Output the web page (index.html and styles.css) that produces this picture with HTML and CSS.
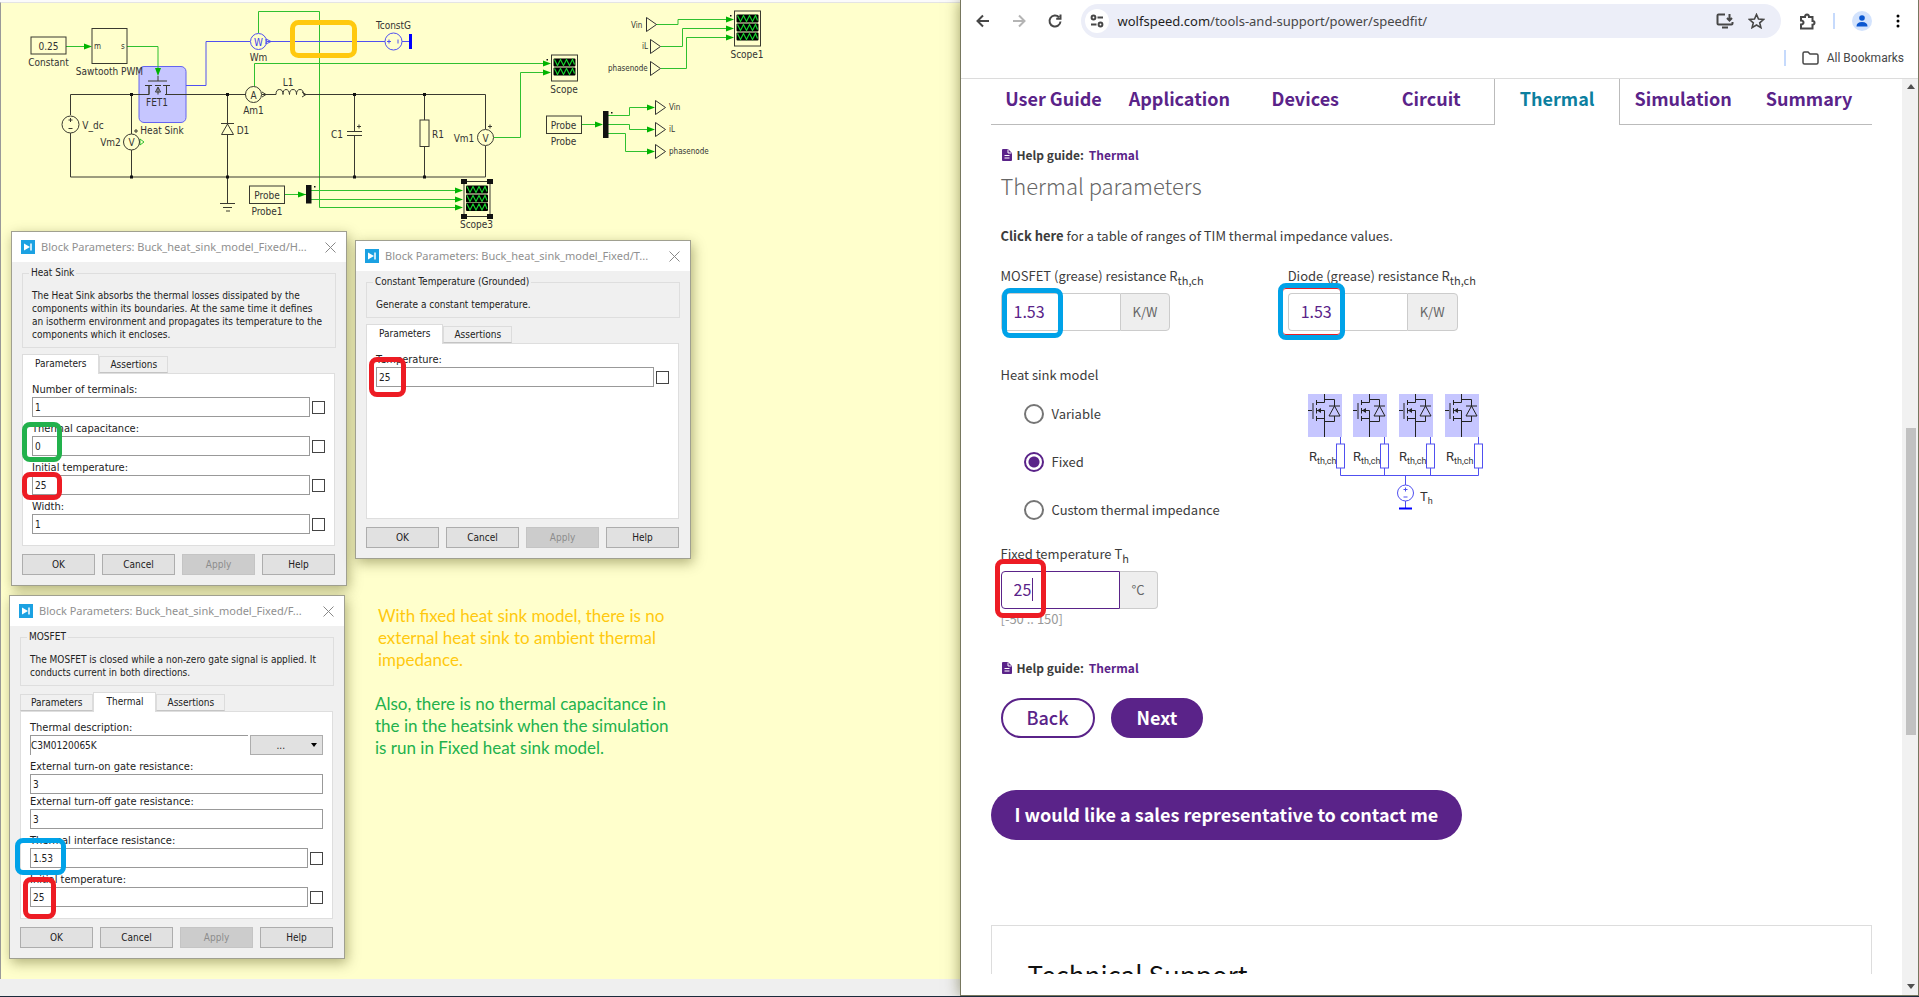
FILE: index.html
```html
<!DOCTYPE html>
<html lang="en">
<head>
<meta charset="utf-8">
<title>SpeedFit thermal parameters</title>
<link rel="stylesheet" href="styles.css">
</head>
<body>
<div class="desktop">
  <main class="editor">
    <div class="canvas">
      <svg class="schematic" width="760" height="232" viewBox="0 0 760 232" role="img" aria-label="Buck converter schematic">
        <defs>
          <g id="wave"><rect width="22" height="8" rx="1" fill="#000"/><path d="M1 1l3 6 3-6 3 6 3-6 3 6 3-6 2 5" fill="none" stroke="#16d02c" stroke-width="1.2"/></g>
          <path id="arrow" d="M-8-3L0 0-8 3z" fill="#00b400"/>
          <path id="port" d="M0-7L10 0 0 7z" fill="none" stroke="#333" stroke-width="1"/>
        </defs>
        <rect x="139" y="66.500" width="47" height="56" rx="5" fill="#c6c6ff" stroke="#6464f0"/>
        <g class="wire-green">
          <path d="M66 46.500H90M127 46.500H158V72M258.500 33V11.500H319.500V207.500H462M254.500 86V63.500H549M494 137.500H520.500V72.500H549M284 194.500H306M311 190.500H462M311 199.500H462"/>
          <path d="M656 24.500H678V19.500H731M661 46.500H682.500V28.500H731M661 68.500H686.500V37.500H731M582 124.500H602M608 115.500H629.500V107.500H654M608 124.500H629.500V129.500H654M608 133.500H625.500V151.500H654"/>
          <path d="M140 139l4 3-4 3z"/>
        </g>
        <use href="#arrow" x="92" y="46.500"/><path d="M155 68h6l-3 8z" fill="#00b400"/>
        <use href="#arrow" x="306" y="194.500"/><use href="#arrow" x="463" y="190.500"/><use href="#arrow" x="463" y="199.500"/><use href="#arrow" x="463" y="207.500"/>
        <use href="#arrow" x="551" y="63.500"/><use href="#arrow" x="551" y="72.500"/>
        <use href="#arrow" x="734" y="19.500"/><use href="#arrow" x="734" y="28.500"/><use href="#arrow" x="734" y="37.500"/>
        <use href="#arrow" x="603" y="124.500"/><use href="#arrow" x="655" y="107.500"/><use href="#arrow" x="655" y="129.500"/><use href="#arrow" x="655" y="151.500"/>
        <g class="wire-blue">
          <path d="M186 85.500H206V41.500H250M267 41.500H385M402 41.500H410"/>
          <circle cx="258.500" cy="41.500" r="8"/><circle cx="393.500" cy="41.500" r="8.500"/>
          <path d="M387 41.500h4M389 39.500v4M398 39.500v4M266 39l5 2.500-5 2.500z"/>
          <path d="M410.500 34v15" stroke="#0000ff" stroke-width="3"/>
        </g>
        <g class="wire-black">
          <rect x="31" y="37" width="35" height="17"/><rect x="92" y="28.500" width="35" height="35"/>
          <path d="M70.500 115V94.500H149V86M165 94.500H246M262 94.500H276M304 94.500H485.500V129M485.500 146V177H70.500V133M131.500 94.500V134M131.500 150V177M227.500 94.500V177"/>
          <circle cx="70.500" cy="124.500" r="8.500"/><path d="M68.500 120h4M70.500 118v4M68.500 128.500h4"/>
          <circle cx="131.500" cy="142" r="8"/><circle cx="253.500" cy="94.500" r="8"/><circle cx="485.500" cy="137.500" r="8"/>
          <path d="M134 131h4M136 129v4M357 126.500h4M359 124.500v4M488 126.500h4M490 124.500v4M262 92l4 2.500-4 2.500M302 92l4 2.500-4 2.500"/>
          <path d="M276 94.500q0-5 3.500-5t3.500 5q0-5 3-5t3.500 5q0-5 3.500-5t3.500 5q0-5 3.500-5t3.500 5"/>
          <path d="M148 81h19M158 76v5M145 85.500h7M155 85.500h6M163 85.500h7M149 86v8.500M158 94.500V88M166.500 86v8.500h9M155.500 92l2.500-5 2.500 5z"/>
          <path d="M221 123.500h13M227.500 124l-6 10.500h12z" fill="#ffffcc"/>
          <path d="M354.500 94.500V131.500M347 131.500h15M347 135.500h15M354.500 135.500V177M424.500 94.500V120M424.500 146.500V177"/>
          <rect x="420" y="120" width="9" height="26.500"/>
          <path d="M227.500 177V203.500M220 203.500h15M223 207.500h9M226 211h4"/>
          <rect x="249.500" y="186" width="35" height="17.500"/><rect x="546.500" y="116" width="35" height="17.500"/>
          <rect x="464" y="181.500" width="26" height="35"/><rect x="551.500" y="55" width="26" height="26"/><rect x="734.500" y="11" width="26" height="35"/>
        </g>
        <g fill="#111">
          <rect x="130" y="93" width="3" height="3"/><rect x="226" y="93" width="3" height="3"/><rect x="353" y="93" width="3" height="3"/><rect x="423" y="93" width="3" height="3"/>
          <rect x="130" y="175.500" width="3" height="3"/><rect x="226" y="175.500" width="3" height="3"/><rect x="353" y="175.500" width="3" height="3"/><rect x="423" y="175.500" width="3" height="3"/>
          <rect x="306" y="185" width="5.500" height="18.500"/><rect x="603" y="111" width="5.500" height="27"/>
          <rect x="461" y="179" width="6" height="5"/><rect x="487" y="179" width="6" height="5"/><rect x="461" y="214" width="6" height="5"/><rect x="487" y="214" width="6" height="5"/>
          <rect x="314" y="186" width="1.500" height="1.500"/><rect x="546.500" y="59" width="1.500" height="1.500"/><rect x="730" y="15" width="1.500" height="1.500"/><rect x="611" y="112" width="1.500" height="1.500"/>
        </g>
        <use href="#wave" x="466" y="185.500"/><use href="#wave" x="466" y="194.500"/><use href="#wave" x="466" y="203"/>
        <use href="#wave" x="553.500" y="58.500"/><use href="#wave" x="553.500" y="67.500"/>
        <use href="#wave" x="736.500" y="14.500"/><use href="#wave" x="736.500" y="23.500"/><use href="#wave" x="736.500" y="32.500"/>
        <use href="#port" x="646.500" y="24.500"/><use href="#port" x="650.500" y="46.500"/><use href="#port" x="650.500" y="68.500"/>
        <use href="#port" x="655.500" y="107.500"/><use href="#port" x="655.500" y="129.500"/><use href="#port" x="655.500" y="151.500"/>
        <g class="part-label">
          <text x="48.500" y="50">0.25</text><text x="48.500" y="66">Constant</text><text x="109.500" y="75">Sawtooth PWM</text>
          <text x="157" y="105.500">FET1</text><text x="162" y="133.500">Heat Sink</text><text x="93" y="129">V_dc</text><text x="110.500" y="146">Vm2</text>
          <text x="131.500" y="146">V</text><text x="258.500" y="61">Wm</text><text x="258.500" y="45.500" fill="#3c3cf0">W</text><text x="393.500" y="29">TconstG</text>
          <text x="253.500" y="98.500">A</text><text x="253.500" y="113.500">Am1</text><text x="288" y="86">L1</text><text x="243" y="133.500">D1</text>
          <text x="337" y="137.500">C1</text><text x="438" y="137.500">R1</text><text x="464" y="142">Vm1</text><text x="485.500" y="141.500">V</text>
          <text x="267" y="199">Probe</text><text x="267" y="215">Probe1</text><text x="476.500" y="228">Scope3</text>
          <text x="564" y="93">Scope</text><text x="747" y="57.500">Scope1</text><text x="563.500" y="129">Probe</text><text x="563.500" y="145">Probe</text>
        </g>
        <g class="port-label">
          <text x="94" y="49">m</text><text x="121" y="49">s</text>
          <text x="631" y="28">Vin</text><text x="642" y="49">iL</text><text x="608" y="71">phasenode</text>
          <text x="669" y="110">Vin</text><text x="669" y="132">iL</text><text x="669" y="154">phasenode</text>
        </g>
        <rect x="292.500" y="22.500" width="62" height="33" rx="6" fill="none" stroke="#ffc90e" stroke-width="5"/>
      </svg>

      <section class="dialog dialog-heatsink">
        <header class="dialog-title"><svg class="app-icon" width="14" height="14" viewBox="0 0 14 14"><rect width="14" height="14" fill="#1ba1e2"/><path d="M3 3.500v7L9 7z" fill="#fff"/><path d="M10 3.500v7" stroke="#fff" stroke-width="1.500"/></svg><h2>Block Parameters: Buck_heat_sink_model_Fixed/H...</h2><button class="close" aria-label="Close"><svg width="11" height="11" viewBox="0 0 11 11"><path d="M.5.5l10 10M10.500.5l-10 10" stroke="#888" fill="none"/></svg></button></header>
        <div class="dialog-body">
          <fieldset><legend>Heat Sink</legend><p>The Heat Sink absorbs the thermal losses dissipated by the<br>components within its boundaries. At the same time it defines<br>an isotherm environment and propagates its temperature to the<br>components which it encloses.</p></fieldset>
          <div class="tabs"><button class="tab active">Parameters</button><button class="tab">Assertions</button></div>
          <div class="panel">
            <div class="field"><label for="a1">Number of terminals:</label><div class="row"><input type="text" id="a1" value="1"><input type="checkbox" aria-label="Show number of terminals"></div></div>
            <div class="field"><label for="a2">Thermal capacitance:</label><div class="row"><input type="text" id="a2" value="0"><input type="checkbox" aria-label="Show thermal capacitance"></div><span class="mark mark-green"></span></div>
            <div class="field"><label for="a3">Initial temperature:</label><div class="row"><input type="text" id="a3" value="25"><input type="checkbox" aria-label="Show initial temperature"></div><span class="mark mark-red-flat"></span></div>
            <div class="field"><label for="a4">Width:</label><div class="row"><input type="text" id="a4" value="1"><input type="checkbox" aria-label="Show width"></div></div>
          </div>
          <div class="actions"><button>OK</button><button>Cancel</button><button disabled>Apply</button><button>Help</button></div>
        </div>
      </section>

      <section class="dialog dialog-temp">
        <header class="dialog-title"><svg class="app-icon" width="14" height="14" viewBox="0 0 14 14"><rect width="14" height="14" fill="#1ba1e2"/><path d="M3 3.500v7L9 7z" fill="#fff"/><path d="M10 3.500v7" stroke="#fff" stroke-width="1.500"/></svg><h2>Block Parameters: Buck_heat_sink_model_Fixed/T...</h2><button class="close" aria-label="Close"><svg width="11" height="11" viewBox="0 0 11 11"><path d="M.5.5l10 10M10.500.5l-10 10" stroke="#888" fill="none"/></svg></button></header>
        <div class="dialog-body">
          <fieldset><legend>Constant Temperature (Grounded)</legend><p>Generate a constant temperature.</p></fieldset>
          <div class="tabs"><button class="tab active">Parameters</button><button class="tab">Assertions</button></div>
          <div class="panel">
            <div class="field"><label for="b1">Temperature:</label><div class="row"><input type="text" id="b1" value="25"><input type="checkbox" aria-label="Show temperature"></div><span class="mark mark-red"></span></div>
          </div>
          <div class="actions"><button>OK</button><button>Cancel</button><button disabled>Apply</button><button>Help</button></div>
        </div>
      </section>

      <section class="dialog dialog-mosfet">
        <header class="dialog-title"><svg class="app-icon" width="14" height="14" viewBox="0 0 14 14"><rect width="14" height="14" fill="#1ba1e2"/><path d="M3 3.500v7L9 7z" fill="#fff"/><path d="M10 3.500v7" stroke="#fff" stroke-width="1.500"/></svg><h2>Block Parameters: Buck_heat_sink_model_Fixed/F...</h2><button class="close" aria-label="Close"><svg width="11" height="11" viewBox="0 0 11 11"><path d="M.5.5l10 10M10.500.5l-10 10" stroke="#888" fill="none"/></svg></button></header>
        <div class="dialog-body">
          <fieldset><legend>MOSFET</legend><p>The MOSFET is closed while a non-zero gate signal is applied. It<br>conducts current in both directions.</p></fieldset>
          <div class="tabs"><button class="tab">Parameters</button><button class="tab active">Thermal</button><button class="tab">Assertions</button></div>
          <div class="panel panel-mosfet">
            <div class="field"><label for="c1">Thermal description:</label><div class="row"><input type="text" class="bare" id="c1" value="C3M0120065K"><button class="browse" aria-label="Browse"><span>...</span><svg width="6" height="4" viewBox="0 0 6 4"><path d="M0 0h6L3 4z"/></svg></button></div></div>
            <div class="field"><label for="c2">External turn-on gate resistance:</label><div class="row"><input type="text" id="c2" value="3"></div></div>
            <div class="field tight"><label for="c3">External turn-off gate resistance:</label><div class="row"><input type="text" id="c3" value="3"></div></div>
            <div class="field"><label for="c4">Thermal interface resistance:</label><div class="row"><input type="text" id="c4" value="1.53"><input type="checkbox" aria-label="Show interface resistance"></div><span class="mark mark-blue"></span></div>
            <div class="field"><label for="c5">Initial temperature:</label><div class="row"><input type="text" id="c5" value="25"><input type="checkbox" aria-label="Show initial temperature"></div><span class="mark mark-red-tall"></span></div>
          </div>
          <div class="actions"><button>OK</button><button>Cancel</button><button disabled>Apply</button><button>Help</button></div>
        </div>
      </section>

      <div class="notes">
        <p class="note-yellow">With fixed heat sink model, there is no<br>external heat sink to ambient thermal<br>impedance.</p>
        <p class="note-green">Also, there is no thermal capacitance in<br>the in the heatsink when the simulation<br>is run in Fixed heat sink model.</p>
      </div>
    </div>
    <footer class="statusbar"></footer>
  </main>

  <section class="browser">
    <header class="toolbar">
      <nav class="nav-buttons">
        <button aria-label="Back"><svg width="16" height="16" viewBox="0 0 16 16"><path d="M14 8H3M8 2.500L2.500 8 8 13.500" class="ico"/></svg></button>
        <button aria-label="Forward"><svg width="16" height="16" viewBox="0 0 16 16"><path d="M2 8h11M8 2.500L13.500 8 8 13.500" class="ico faint"/></svg></button>
        <button aria-label="Reload"><svg width="16" height="16" viewBox="0 0 16 16"><path d="M13.500 8.500A5.500 5.500 0 1 1 12 4.200M13.500 1.500v4.300H9.200" class="ico"/></svg></button>
      </nav>
      <div class="omnibox">
        <button class="site" aria-label="Site information"><svg width="14" height="14" viewBox="0 0 14 14"><circle cx="3.500" cy="3.500" r="1.900" class="ico"/><path d="M7.500 3.500H13M1 10.500h5.500" class="ico"/><circle cx="10.500" cy="10.500" r="1.900" class="ico"/></svg></button>
        <span class="url"><b>wolfspeed.com</b>/tools-and-support/power/speedfit/</span>
        <button aria-label="Install"><svg width="18" height="16" viewBox="0 0 18 16"><path d="M9 1.500H2.500q-1 0-1 1v8q0 1 1 1h13q1 0 1-1V9M6 14.500h6M13.500 1v6M11 5l2.500 2.500L16 5" class="ico"/></svg></button>
        <button aria-label="Bookmark"><svg width="17" height="16" viewBox="0 0 17 16"><path d="M8.500 1.500l2 4.600 5 .4-3.800 3.300 1.200 4.800-4.400-2.600-4.400 2.600 1.200-4.800L1.500 6.500l5-.4z" class="ico star"/></svg></button>
      </div>
      <div class="tools">
        <button aria-label="Extensions"><svg width="17" height="17" viewBox="0 0 17 17"><path d="M2 4h4q0-2.500 2-2.500T10 4h3.500v4q2 0 2 1.800t-2 1.900v3.800H2v-4q2.500-.2 2.500-2T2 7.500z" class="ico"/></svg></button>
        <i class="divider"></i>
        <button class="profile" aria-label="Profile"><svg width="20" height="20" viewBox="0 0 20 20"><circle cx="10" cy="10" r="10" fill="#d3e3fd"/><circle cx="10" cy="7" r="2.800" fill="#0b57d0"/><path d="M4.500 15.500q0-4.500 5.500-4.500t5.500 4.500z" fill="#0b57d0"/></svg></button>
        <button aria-label="Menu"><svg width="4" height="16" viewBox="0 0 4 16"><circle cx="2" cy="3" r="1.500"/><circle cx="2" cy="8" r="1.500"/><circle cx="2" cy="13" r="1.500"/></svg></button>
      </div>
    </header>
    <div class="bookmarks"><i class="divider"></i><button><svg width="17" height="14" viewBox="0 0 17 14"><path d="M1 2.500q0-1.500 1.500-1.500H6l2 2h6.500Q16 3 16 4.500v7q0 1.500-1.500 1.500h-12Q1 13 1 11.500z" class="ico"/></svg>All Bookmarks</button></div>
    <div class="viewport">
      <div class="page">
        <nav class="steps"><a href="#u">User Guide</a><a href="#a">Application</a><a href="#d">Devices</a><a href="#c">Circuit</a><a href="#t" class="current">Thermal</a><a href="#s">Simulation</a><a href="#y">Summary</a></nav>
        <form class="form">
          <p class="help"><svg width="10" height="12" viewBox="0 0 10 12"><path d="M0 1q0-1 1-1h5l4 4v7q0 1-1 1H1q-1 0-1-1z" fill="#5a2389"/><path d="M6 .5V4h3.500M2.500 6.500h5M2.500 9h5" stroke="#fff" fill="none"/></svg>Help guide: <a href="#t">Thermal</a></p>
          <h1>Thermal parameters</h1>
          <p class="click"><b>Click here</b> for a table of ranges of TIM thermal impedance values.</p>
          <div class="pair">
            <div><label for="m">MOSFET (grease) resistance R<sub>th,ch</sub></label><div class="group"><input type="text" id="m" value="1.53"><span class="unit">K/W</span><span class="mark mark-web1"></span></div></div>
            <div><label for="d">Diode (grease) resistance R<sub>th,ch</sub></label><div class="group"><input type="text" id="d" value="1.53"><span class="unit">K/W</span><span class="mark mark-web2"></span></div></div>
          </div>
          <div class="pair model">
            <div>
              <p>Heat sink model</p>
              <div class="radios">
                <label><input type="radio" name="hs">Variable</label>
                <label><input type="radio" name="hs" checked>Fixed</label>
                <label><input type="radio" name="hs">Custom thermal impedance</label>
              </div>
            </div>
            <svg class="network" width="180" height="118" viewBox="0 0 180 118" role="img" aria-label="Thermal network">
              <defs><g id="fet"><rect width="34" height="43" fill="#c6c6ff"/><path d="M0 16.500h4M5 9v16M8.500 6v5M8.500 14v5.500M8.500 22v5M8.500 8.500h8V0M8.500 16.500h8V43M8.500 24.500h8M16.500 5.500h10V12M21 12h11M26.500 12L21 22h11zM26.500 22v5.500h-10" fill="none" stroke="#222"/><path d="M9 16.500l4-2.500v5z" fill="#222"/></g></defs>
              <use href="#fet" x="0"/><use href="#fet" x="45"/><use href="#fet" x="91"/><use href="#fet" x="137"/>
              <g class="wire-blue">
                <path d="M32.500 43v7M32.500 74v7.500M76.500 43v7M76.500 74v7.500M122.500 43v7M122.500 74v7.500M170.500 43v7M170.500 74v7.500M32.500 81.500h138M97.500 81.500V91M97.500 107v7M95.500 95.500h4M97.500 93.500v4M95.500 103h4"/>
                <rect x="28.500" y="50" width="8" height="24"/><rect x="72.500" y="50" width="8" height="24"/><rect x="118.500" y="50" width="8" height="24"/><rect x="166.500" y="50" width="8" height="24"/>
                <circle cx="97.500" cy="99" r="8"/><path d="M91 114.500h13" stroke="#0000ff" stroke-width="2"/>
              </g>
              <g class="net-label"><text x="1" y="67">R<tspan dy="3">th,ch</tspan></text><text x="45" y="67">R<tspan dy="3">th,ch</tspan></text><text x="91" y="67">R<tspan dy="3">th,ch</tspan></text><text x="138" y="67">R<tspan dy="3">th,ch</tspan></text><text x="112" y="107">T<tspan dy="3">h</tspan></text></g>
            </svg>
          </div>
          <div class="fixed-temp">
            <label for="t">Fixed temperature T<sub>h</sub></label>
            <div class="group focus"><input type="text" id="t" value="25"><span class="unit">°C</span><i class="caret"></i><span class="mark mark-web3"></span></div>
            <p class="hint">[-50 .. 150]</p>
          </div>
          <p class="help">
            <svg width="10" height="12" viewBox="0 0 10 12"><path d="M0 1q0-1 1-1h5l4 4v7q0 1-1 1H1q-1 0-1-1z" fill="#5a2389"/><path d="M6 .5V4h3.500M2.500 6.500h5M2.500 9h5" stroke="#fff" fill="none"/></svg>Help guide: <a href="#t">Thermal</a></p>
          <div class="wizard"><button type="button" class="outline">Back</button><button type="button" class="solid">Next</button></div>
        </form>
        <button class="contact">I would like a sales representative to contact me</button>
        <section class="support"><h2>Technical Support</h2></section>
      </div>
      <div class="scrollbar"><svg width="8" height="5" viewBox="0 0 8 5"><path d="M0 5h8L4 0z"/></svg><div class="track"><i></i></div><svg width="8" height="5" viewBox="0 0 8 5"><path d="M0 0h8L4 5z"/></svg></div>
    </div>
  </section>
</div>
</body>
</html>
```
FILE: styles.css
```css
* { box-sizing: border-box; }
body { margin: 0; }
h1, h2, p { margin: 0; }
button, input { font: inherit; color: inherit; margin: 0; }
button { border: 0; background: none; padding: 0; }
svg { display: block; flex: none; }

.desktop { display: grid; grid-template-columns: 1fr 1fr; height: 100vh; overflow: hidden; border-bottom: 1px solid #1c2b3c; background: #efefef; }

/* Schematic editor */
.editor { display: flex; flex-direction: column; min-width: 0; border-top: 2px solid #fbfbfb; font: 10px/13px "DejaVu Sans Condensed", "DejaVu Sans", sans-serif; color: #222; }
.canvas { position: relative; flex: 1; min-height: 0; background: #ffffcc; border-left: 1px solid #999; border-top: 1px solid #e4e4e4; }
.statusbar { height: 17px; background: #efefef; }
.schematic { margin: -3px 0 0 -1px; overflow: visible; }
.wire-green path { fill: none; stroke: #2fc02f; stroke-width: 1; }
.wire-blue { fill: none; stroke: #5050f0; stroke-width: 1; }
.wire-black { fill: none; stroke: #3a3a30; stroke-width: 1; }
.part-label { font-size: 10px; text-anchor: middle; fill: #333; }
.port-label { font-size: 8px; fill: #333; }

.dialog { position: absolute; display: flex; flex-direction: column; width: 336px; background: #f0f0f0; border: 1px solid #a0a090; box-shadow: 2px 4px 12px rgba(60, 60, 0, .4); }
.dialog-heatsink { left: 10px; top: 228px; }
.dialog-temp { left: 354px; top: 237px; height: 319px; }
.dialog-mosfet { left: 8px; top: 592px; }
.dialog-title { display: flex; flex: none; align-items: center; gap: 6px; height: 30px; padding: 0 10px 0 9px; background: #fff; font: 11px/20px "Noto Sans", sans-serif; color: #909090; }
.dialog-title h2 { flex: 1; min-width: 0; font: inherit; white-space: nowrap; }
.dialog-body { flex: 1; display: flex; flex-direction: column; padding: 4px 10px 10px; }
fieldset { margin: 0 0 6px; padding: 9px 0 6px 9px; border: 1px solid #dedede; min-width: 0; }
legend { margin-left: -3px; padding: 0 2px; line-height: 14px; }
fieldset p { white-space: nowrap; }
.tabs { display: flex; align-items: flex-end; height: 20px; margin-bottom: -1px; position: relative; }
.tab { height: 17px; padding: 0 10px; border: 1px solid #dcdcdc; border-bottom-color: #c4c4c4; background: #f0f0f0; margin-bottom: 1px; }
.tab.active { height: 20px; padding: 0 12px 2px; background: #fff; border-bottom: 0; margin-bottom: 0; }
.panel { flex: 1; display: flex; flex-direction: column; gap: 5px; padding: 9px 9px 11px; margin-right: 1px; border: 1px solid #dedede; background: #fff; }
.field { position: relative; }
.field label { display: block; height: 14px; font-size: 11px; line-height: 14px; }
.row { display: flex; align-items: center; gap: 2px; height: 20px; }
.row input[type="text"] { flex: 1; min-width: 0; height: 20px; padding: 0 2px; border: 1px solid #999; background: #fff; }
.row input[type="text"].bare { border-right: 0; border-bottom: 0; padding: 0; }
.row input[type="checkbox"] { appearance: none; width: 13px; height: 13px; border: 1px solid #444; background: #fff; }
.browse { display: flex; justify-content: flex-end; align-items: center; gap: 26px; width: 73px; height: 20px; padding-right: 5px; border: 1px solid #adadad; background: #e1e1e1; }
.panel-mosfet .field.tight { margin-top: -4px; }
.actions { display: flex; gap: 7px; margin-top: 8px; }
.actions button { width: 73px; height: 21px; border: 1px solid #adadad; background: #e1e1e1; }
.actions button:disabled { background: #cccccc; border-color: #c4c4c4; color: #8c8c8c; }

.notes { position: absolute; left: 374px; top: 602px; font: 17px/22px Lato, sans-serif; }
.note-yellow { color: #ffc90e; margin: 0 0 22px 3px; }
.note-green { color: #22b14c; }

/* Hand-drawn highlight frames */
.mark { position: absolute; border: 5px solid #ed1c24; border-radius: 8px; pointer-events: none; }
.mark-green { left: -10px; top: 0; width: 40px; height: 40px; border-color: #22b14c; }
.mark-red-flat { left: -10px; top: 11px; width: 40px; height: 28px; }
.mark-red { left: -7px; top: 4px; width: 37px; height: 40px; }
.mark-blue { left: -15px; top: 4px; width: 51px; height: 37px; border-color: #00a2e8; }
.mark-red-tall { left: -7px; top: 4px; width: 33px; height: 42px; }
.mark-web1 { left: 1px; top: -5px; width: 61px; height: 50px; border-color: #00a2e8; }
.mark-web2 { left: -10px; top: -10px; width: 67px; height: 57px; border-color: #00a2e8; box-shadow: inset 0 1px #ed1c24, inset 0 -1px #ed1c24; }
.mark-web3 { left: -6px; top: -12px; width: 51px; height: 59px; }

/* Browser window */
.browser { position: relative; z-index: 1; display: flex; flex-direction: column; min-width: 0; min-height: 0; background: #fff; border: 1px solid #77775f; border-top: 0; box-shadow: 0 0 14px rgba(60, 60, 0, .5); font: 14px/20px "Noto Sans CJK SC", "Open Sans", sans-serif; color: #3c3c3c; }
.ico { fill: none; stroke: #474747; stroke-width: 2; }
.faint { stroke: #b4b4b4; }
.star { stroke-width: 1.6; }
.toolbar { display: flex; align-items: center; gap: 18px; height: 42px; padding: 0 18px 0 14px; font: 13px/20px "Noto Sans", sans-serif; }
.nav-buttons { display: flex; gap: 20px; }
.omnibox { display: flex; flex: 1; align-items: center; gap: 14px; height: 34px; padding: 0 16px 0 4px; border-radius: 17px; background: #eceef8; color: #474747; }
.site { display: grid; place-items: center; width: 24px; height: 24px; margin-right: -5px; border-radius: 12px; background: #fff; }
.url { flex: 1; }
.url b { font-weight: 400; color: #1f1f1f; }
.tools { display: flex; align-items: center; gap: 17px; }
.tools > :last-child { margin-left: 7px; }
.divider { flex: none; width: 2px; height: 16px; background: #c6dafc; }
.bookmarks { display: flex; justify-content: flex-end; align-items: center; gap: 16px; height: 37px; padding: 0 14px 4px; border-bottom: 1px solid #dcdcdc; font: 12px/16px Roboto, sans-serif; color: #474747; }
.bookmarks button { display: flex; align-items: center; gap: 8px; }
.bookmarks .ico { stroke-width: 1.5; }
.viewport { display: flex; flex: 1; min-height: 0; }
.page { flex: 1; min-width: 0; overflow: hidden; margin-bottom: 21px; padding: 0 30px; }
.steps { display: grid; grid-template-columns: repeat(7, 1fr); height: 46px; font-size: 18px; line-height: 39px; font-weight: 700; text-align: center; }
.steps a { color: #5a2389; text-decoration: none; border-bottom: 1px solid #bbb; white-space: nowrap; }
.steps .current { color: #0c7f9f; border: solid #bbb; border-width: 0 1px; }
.form { padding: 20px 10px 0; }
.help { display: flex; align-items: center; gap: 5px; font-size: 12px; font-weight: 700; line-height: 20px; padding-left: 1px; }
.help a { color: #5a2389; text-decoration: none; }
h1 { margin: 6px 0 27px; font-size: 22px; line-height: 28px; font-weight: 300; color: #666; }
.click { margin-bottom: 20px; font-size: 13px; }
.pair { display: grid; grid-template-columns: 1fr 2fr; font-size: 13px; }
.pair label, .fixed-temp label { display: block; height: 20px; white-space: nowrap; }
sub { font-size: 11px; line-height: 0; vertical-align: -4px; }
.group { position: relative; display: flex; width: max-content; height: 38px; margin-top: 7px; }
.group input { width: 119px; padding: 0 0 2px 12px; border: 1px solid #ccc; border-right: 0; border-radius: 4px 0 0 4px; font-size: 16px; color: #5a2389; background: #fff; }
.unit { display: grid; place-items: center; padding: 0 12px; border: 1px solid #ccc; border-radius: 0 4px 4px 0; background: #eee; color: #666; }
.focus input { border: 1px solid #5a2389; }
.focus .unit { border-left: 0; }
.caret { position: absolute; left: 31px; top: 7px; width: 1px; height: 23px; background: #5a2389; }
.model { margin-top: 34px; }
.radios { display: grid; gap: 28px; margin: 19px 0 0 23px; }
.radios label { display: flex; align-items: center; gap: 8px; }
.radios input { appearance: none; width: 20px; height: 20px; border: 2px solid #757575; border-radius: 50%; background: #fff; }
.radios input:checked { border-color: #5a2389; background: radial-gradient(circle, #5a2389 5px, #fff 6px); }
.network { margin: 29px 0 0 20px; }
.net-label { font: 13px Roboto, sans-serif; fill: #333; }
.net-label tspan { font-size: 9px; }
.fixed-temp { margin: 24px 0 29px; font-size: 13px; }
.hint { color: #999; }
.wizard { display: flex; gap: 16px; margin-top: 20px; font-size: 18px; }
.wizard button { height: 40px; padding: 0 24px 2px; border: 2px solid #5a2389; border-radius: 20px; color: #5a2389; font-weight: 500; }
.wizard .solid { background: #5a2389; color: #fff; font-weight: 700; }
.contact { display: block; height: 50px; margin: 52px 0 85px; padding: 0 24px 2px; border-radius: 25px; background: #5a2389; color: #fff; font-size: 18px; font-weight: 700; white-space: nowrap; }
.support { height: 160px; padding: 28px 36px; border: 1px solid #ddd; }
.support h2 { font-size: 26px; line-height: 40px; font-weight: 400; color: #111; }
.scrollbar { display: flex; flex-direction: column; align-items: center; gap: 8px; width: 16px; padding: 5px 2px 6px 4px; background: #f1f1f1; }
.scrollbar svg { fill: #505050; }
.track { flex: 1; width: 10px; display: flex; flex-direction: column; }
.track::before { content: ""; flex: 332; }
.track i { flex: 308; background: #c1c1c1; }
.track::after { content: ""; flex: 242; }
```
